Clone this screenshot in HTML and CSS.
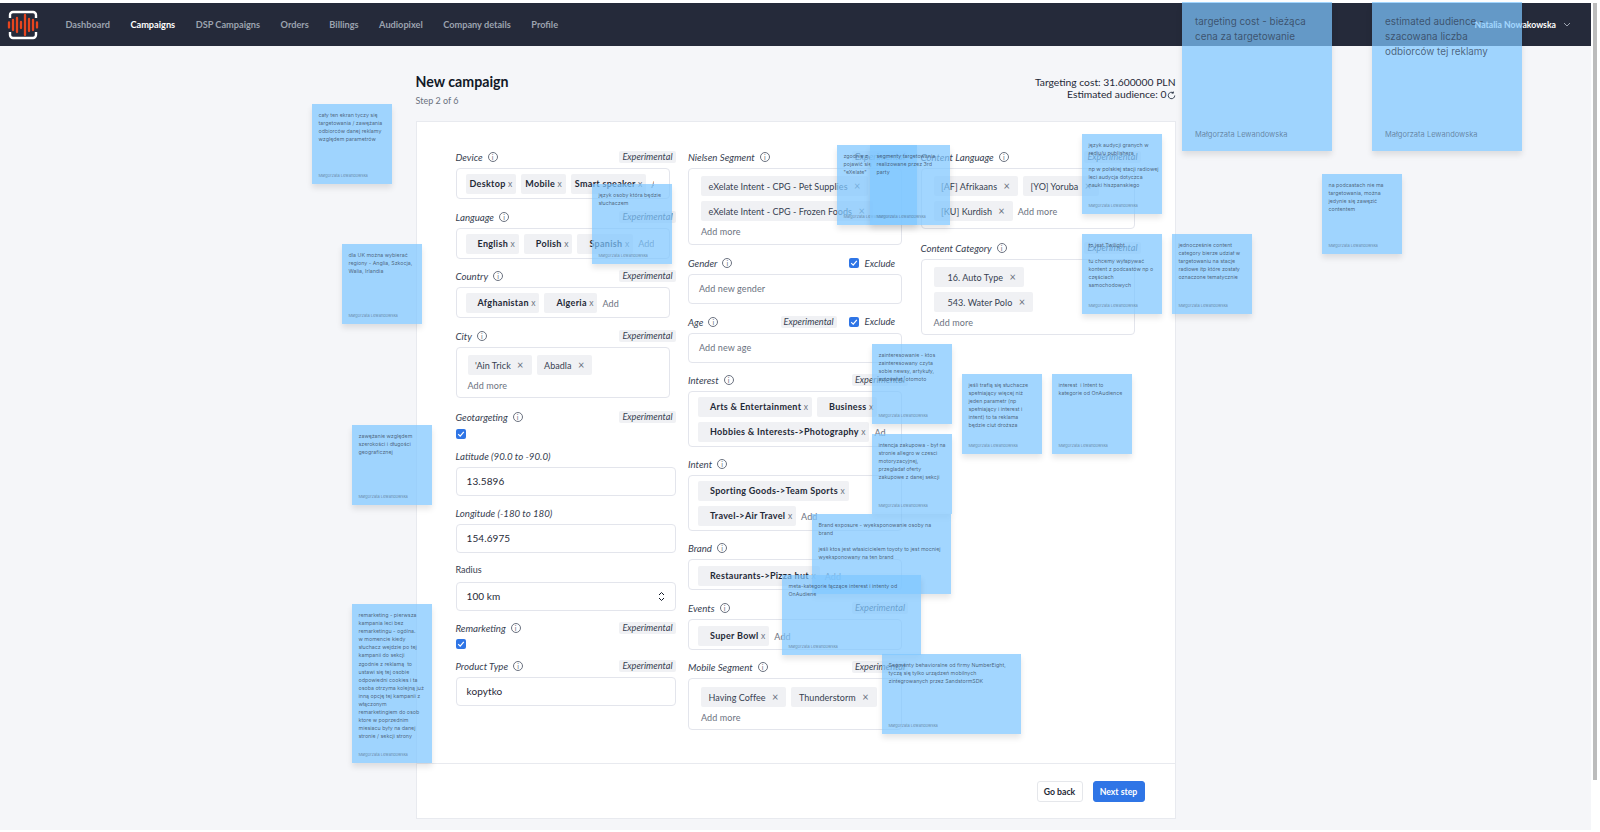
FILE: index.html
```html
<!DOCTYPE html>
<html lang="pl">
<head>
  <meta charset="UTF-8" />
  <meta name="viewport" content="width=device-width, initial-scale=1.0"/>
  <title>New campaign</title>
  <link rel="stylesheet" href="styles.css">
</head>
<body>
<div class="app">
  <main class="page">
    <nav class="navbar">
      <svg class="logo" width="32" height="30" viewBox="0 0 32 30">
        <path d="M3 8V5a3 3 0 0 1 3-3h20a3 3 0 0 1 3 3v3M3 22v3a3 3 0 0 0 3 3h20a3 3 0 0 0 3-3v-3" fill="none" stroke="#fff" stroke-width="2.4"/>
        <path d="M2 12.5v5M6 10v10M10 8v14M14 12v6M18 5v20M22 9v12M26 10v10M30 12.5v5" fill="none" stroke="#e8451e" stroke-width="2.3" stroke-linecap="round"/>
      </svg>
      <a class="nav-link">Dashboard</a>
      <a class="nav-link active">Campaigns</a>
      <a class="nav-link">DSP Campaigns</a>
      <a class="nav-link">Orders</a>
      <a class="nav-link">Billings</a>
      <a class="nav-link">Audiopixel</a>
      <a class="nav-link">Company details</a>
      <a class="nav-link">Profile</a>
      <div class="user">Natalia Nowakowska
        <svg width="8" height="5" viewBox="0 0 8 5"><path d="M1 1l3 3 3-3" fill="none" stroke="#9ca3af" stroke-width="1"/></svg>
      </div>
    </nav>

    <div class="container">
      <header class="head">
        <div>
          <h1>New campaign</h1>
          <p class="step">Step 2 of 6</p>
        </div>
        <div class="costs">
          <div>Targeting cost: 31.600000 PLN</div>
          <div>Estimated audience: 0<svg class="refresh" width="9" height="9" viewBox="0 0 10 10"><path d="M8.6 5A3.6 3.6 0 1 1 7 2M7 .6V2.4H5.2" fill="none" stroke="#374151" stroke-width="1.1"/></svg></div>
        </div>
      </header>

      <section class="card">
        <div class="form">
          <div class="col">
            <div class="field gap-half">
              <div class="label-row"><label>Device</label><i class="info">i</i><span class="pill">Experimental</span></div>
              <div class="box box-line">
                <div class="tag-row">
                  <span class="chip bold slim">Desktop <b>x</b></span>
                  <span class="chip bold slim">Mobile <b>x</b></span>
                  <span class="chip bold slim">Smart speaker <b>x</b></span>
                  <span class="add">Add</span>
                </div>
              </div>
            </div>
            <div class="field gap-half">
              <div class="label-row"><label>Language</label><i class="info">i</i><span class="pill">Experimental</span></div>
              <div class="box box-line">
                <div class="tag-row">
                  <span class="chip bold">English <b>x</b></span>
                  <span class="chip bold">Polish <b>x</b></span>
                  <span class="chip bold">Spanish <b>x</b></span>
                  <span class="add">Add</span>
                </div>
              </div>
            </div>
            <div class="field gap-half">
              <div class="label-row"><label>Country</label><i class="info">i</i><span class="pill">Experimental</span></div>
              <div class="box box-line">
                <div class="tag-row">
                  <span class="chip bold">Afghanistan <b>x</b></span>
                  <span class="chip bold">Algeria <b>x</b></span>
                  <span class="add">Add</span>
                </div>
              </div>
            </div>
            <div class="field gap-13">
              <div class="label-row"><label>City</label><i class="info">i</i><span class="pill">Experimental</span></div>
              <div class="box box-tags city">
                <div class="tag-row">
                  <span class="chip">'Ain Trick <em>×</em></span>
                  <span class="chip">Abadla <em>×</em></span>
                </div>
                <span class="add more">Add more</span>
              </div>
            </div>
            <div class="field gap-11">
              <div class="label-row"><label>Geotargeting</label><i class="info">i</i><span class="pill">Experimental</span></div>
              <span class="check top6"><svg width="8" height="8" viewBox="0 0 8 8"><path d="M1.2 4.2l2 2 3.6-4.4" fill="none" stroke="#fff" stroke-width="1.2"/></svg></span>
            </div>
            <div class="field gap-11">
              <div class="label-row"><label>Latitude (90.0 to -90.0)</label></div>
              <div class="input">13.5896</div>
            </div>
            <div class="field gap-11">
              <div class="label-row"><label>Longitude (-180 to 180)</label></div>
              <div class="input">154.6975</div>
            </div>
            <div class="field gap-11">
              <div class="label-row plain-row"><label class="plain">Radius</label></div>
              <div class="input select">100 km
                <svg width="7" height="11" viewBox="0 0 7 11"><path d="M1 4l2.5-2.5L6 4M1 7l2.5 2.5L6 7" fill="none" stroke="#111827" stroke-width="1"/></svg>
              </div>
            </div>
            <div class="field gap-11">
              <div class="label-row"><label>Remarketing</label><i class="info">i</i><span class="pill">Experimental</span></div>
              <span class="check"><svg width="8" height="8" viewBox="0 0 8 8"><path d="M1.2 4.2l2 2 3.6-4.4" fill="none" stroke="#fff" stroke-width="1.2"/></svg></span>
            </div>
            <div class="field">
              <div class="label-row"><label>Product Type</label><i class="info">i</i><span class="pill">Experimental</span></div>
              <div class="input">kopytko</div>
            </div>
          </div>

          <div class="col">
            <div class="field">
              <div class="label-row"><label>Nielsen Segment</label><i class="info">i</i><span class="pill">Experimental</span></div>
              <div class="box box-tags">
                <div class="tag-row"><span class="chip">eXelate Intent - CPG - Pet Supplies <em>×</em></span></div>
                <div class="tag-row"><span class="chip">eXelate Intent - CPG - Frozen Foods <em>×</em></span></div>
                <span class="add more">Add more</span>
              </div>
            </div>
            <div class="field gap-half">
              <div class="label-row"><label>Gender</label><i class="info">i</i>
                <span class="exclude"><span class="check"><svg width="8" height="8" viewBox="0 0 8 8"><path d="M1.2 4.2l2 2 3.6-4.4" fill="none" stroke="#fff" stroke-width="1.2"/></svg></span>Exclude</span>
              </div>
              <div class="box box-empty">Add new gender</div>
            </div>
            <div class="field gap-half">
              <div class="label-row"><label>Age</label><i class="info">i</i><span class="pill">Experimental</span>
                <span class="exclude next"><span class="check"><svg width="8" height="8" viewBox="0 0 8 8"><path d="M1.2 4.2l2 2 3.6-4.4" fill="none" stroke="#fff" stroke-width="1.2"/></svg></span>Exclude</span>
              </div>
              <div class="box box-empty">Add new age</div>
            </div>
            <div class="field gap-11">
              <div class="label-row"><label>Interest</label><i class="info">i</i><span class="pill">Experimental</span></div>
              <div class="box box-line">
                <div class="tag-row">
                  <span class="chip bold">Arts &amp; Entertainment <b>x</b></span>
                  <span class="chip bold">Business <b>x</b></span>
                </div>
                <div class="tag-row">
                  <span class="chip bold">Hobbies &amp; Interests-&gt;Photography <b>x</b></span>
                  <span class="add">Add</span>
                </div>
              </div>
            </div>
            <div class="field gap-11">
              <div class="label-row"><label>Intent</label><i class="info">i</i></div>
              <div class="box box-line">
                <div class="tag-row"><span class="chip bold">Sporting Goods-&gt;Team Sports <b>x</b></span></div>
                <div class="tag-row">
                  <span class="chip bold">Travel-&gt;Air Travel <b>x</b></span>
                  <span class="add">Add</span>
                </div>
              </div>
            </div>
            <div class="field">
              <div class="label-row"><label>Brand</label><i class="info">i</i></div>
              <div class="box box-line low">
                <div class="tag-row">
                  <span class="chip bold">Restaurants-&gt;Pizza hut <b>x</b></span>
                  <span class="add">Add</span>
                </div>
              </div>
            </div>
            <div class="field gap-11">
              <div class="label-row"><label>Events</label><i class="info">i</i><span class="pill">Experimental</span></div>
              <div class="box box-line low">
                <div class="tag-row">
                  <span class="chip bold">Super Bowl <b>x</b></span>
                  <span class="add">Add</span>
                </div>
              </div>
            </div>
            <div class="field">
              <div class="label-row"><label>Mobile Segment</label><i class="info">i</i><span class="pill">Experimental</span></div>
              <div class="box box-tags low">
                <div class="tag-row">
                  <span class="chip">Having Coffee <em>×</em></span>
                  <span class="chip">Thunderstorm <em>×</em></span>
                </div>
                <span class="add more">Add more</span>
              </div>
            </div>
          </div>

          <div class="col">
            <div class="field gap-13">
              <div class="label-row"><label>Content Language</label><i class="info">i</i><span class="pill">Experimental</span></div>
              <div class="box box-tags lang">
                <div class="tag-row">
                  <span class="chip">[AF] Afrikaans <em>×</em></span>
                  <span class="chip">[YO] Yoruba <em>×</em></span>
                </div>
                <div class="tag-row">
                  <span class="chip">[KU] Kurdish <em>×</em></span>
                  <span class="add">Add more</span>
                </div>
              </div>
            </div>
            <div class="field">
              <div class="label-row"><label>Content Category</label><i class="info">i</i><span class="pill">Experimental</span></div>
              <div class="box box-tags city-bottom">
                <div class="tag-row"><span class="chip wide">16. Auto Type <em>×</em></span></div>
                <div class="tag-row"><span class="chip wide">543. Water Polo <em>×</em></span></div>
                <span class="add more">Add more</span>
              </div>
            </div>
          </div>
        </div>
        <footer class="actions">
          <button class="btn">Go back</button>
          <button class="btn primary">Next step</button>
        </footer>
      </section>
    </div>

    <!-- karteczki z komentarzami -->
    <div class="note n1"><p>cały ten ekran tyczy się<br>targetowania / zawężania<br>odbiorców danej reklamy<br>względem parametrów</p><small>Małgorzata Lewandowska</small></div>
    <div class="note n2"><p>język osoby która będzie<br>słuchaczem</p><small>Małgorzata Lewandowska</small></div>
    <div class="note n3"><p>dla UK można wybierać<br>regiony - Anglia, Szkocja,<br>Walia, Irlandia</p><small>Małgorzata Lewandowska</small></div>
    <div class="note n4"><p>zawężanie względem<br>szerokości i długości<br>geograficznej</p><small>Małgorzata Lewandowska</small></div>
    <div class="note n5"><p>remarketing - pierwsza<br>kampania leci bez<br>remarketingu - ogólna.<br>w momencie kiedy<br>słuchacz wejdzie po tej<br>kampanii do sekcji<br>zgodnie z reklamą&nbsp; to<br>ustawi się tej osobie<br>odpowiedni cookies i ta<br>osoba otrzyma kolejną już<br>inną opcję tej kampanii z<br>włączonym<br>remarketingiem do osob<br>ktore w poprzednim<br>miesiacu były na danej<br>stronie / sekcji strony</p><small>Małgorzata Lewandowska</small></div>
    <div class="note n6"><p>zgodnie z<br>pojawić się<br>"eXelate"</p><small>Małgorzata Lewandowska</small></div>
    <div class="note n7"><p>segmenty targetowania<br>realizowane przez 3rd<br>party</p><small>Małgorzata Lewandowska</small></div>
    <div class="note n8"><p>język audycji granych w<br>radiu/u publishera<br><br>np w polskiej stacji radiowej<br>leci audycja dotyczca<br>nauki hiszpanskiego</p><small>Małgorzata Lewandowska</small></div>
    <div class="note n9"><p>to jest Twilight<br><br>tu chcemy wyłapywać<br>kontent z podcastów np o<br>częściach<br>samochodowych</p><small>Małgorzata Lewandowska</small></div>
    <div class="note n10"><p>jednocześnie content<br>category bierze udział w<br>targetowaniu na stacje<br>radiowe itp które zostały<br>oznaczone tematycznie</p><small>Małgorzata Lewandowska</small></div>
    <div class="note n11"><p>na podcastach nie ma<br>targetowania, można<br>jedynie się zawęzić<br>contentem</p><small>Małgorzata Lewandowska</small></div>
    <div class="note big n12"><p>targeting cost - bieżąca<br>cena za targetowanie</p><small>Małgorzata Lewandowska</small></div>
    <div class="note big n13"><p>estimated audience -<br>szacowana liczba<br>odbiorców tej reklamy</p><small>Małgorzata Lewandowska</small></div>
    <div class="note n14"><p>zainteresowanie - ktos<br>zainteresowany czyta<br>sobie newsy, artykuły,<br>autoświat, otomoto</p><small>Małgorzata Lewandowska</small></div>
    <div class="note n15"><p>jeśli trafią się słuchacze<br>spełniający więcej niż<br>jeden parametr (np<br>spełniający i interest i<br>intent) to ta reklama<br>będzie ciut droższa</p><small>Małgorzata Lewandowska</small></div>
    <div class="note n16"><p>interest&nbsp; i Intent to<br>kategorie od OnAudience</p><small>Małgorzata Lewandowska</small></div>
    <div class="note n17"><p>intencja zakupowa - był na<br>stronie allegro w czesci<br>motoryzacyjnej,<br>przegladał oferty<br>zakupowe z danej sekcji</p><small>Małgorzata Lewandowska</small></div>
    <div class="note wide n18"><p>Brand exposure - wyeksponowanie osoby na<br>brand<br><br>jeśli ktos jest własicicielem toyoty to jest mocniej<br>wyeksponowany na ten brand</p></div>
    <div class="note wide n19"><p>meta-kategorie łączące interest i intenty od<br>OnAudiene</p><small>Małgorzata Lewandowska</small></div>
    <div class="note wide n20"><p>Segmenty behavioralne od firmy NumberEight,<br>tyczą się tylko urządzeń mobilnych<br>zintegrowanych przez SandstormSDK</p><small>Małgorzata Lewandowska</small></div>
  </main>
  <div class="scrollbar"><div class="thumb"></div></div>
</div>
</body>
</html>
```

FILE: styles.css
```css
* {
  box-sizing: border-box;
}

html, body {
  margin: 0;
  height: 100%;
  overflow: hidden;
}

body {
  font-family: 'Lato', 'Open Sans', sans-serif;
  background-color: #fff;
  color: #374151;
  font-size: 11px;
}

.app {
  display: flex;
  height: 832px;
  padding: 3px 0 2px;
}

.page {
  flex: 1;
  position: relative;
  background-color: #f5f6f9;
}

.scrollbar {
  width: 9px;
  padding-left: 2px;
}

.thumb {
  width: 4px;
  height: 777px;
  background-color: #bcbcbc;
}

/* navbar */
.navbar {
  height: 43px;
  background-color: #252a3a;
  display: flex;
  align-items: center;
  gap: 20.5px;
  padding: 0 20px 0 7px;
}

.logo {
  margin-right: 6px;
}

.nav-link {
  color: #9ca3af;
  font-size: 9.2px;
  font-weight: 700;
}

.nav-link.active {
  color: #fff;
}

.user {
  margin-left: auto;
  color: #fff;
  font-size: 8.7px;
  font-weight: 700;
  display: flex;
  align-items: center;
  gap: 7px;
}

/* header */
.container {
  width: 760px;
  margin: 0 auto;
}

.head {
  height: 75px;
  padding-top: 27px;
  display: flex;
  justify-content: space-between;
}

h1 {
  margin: 0;
  font-size: 14.2px;
  line-height: 18px;
  color: #111827;
  font-weight: 700;
}

.step {
  margin: 4px 0 0;
  font-size: 9px;
  line-height: 12px;
  color: #6b7280;
}

.costs {
  text-align: right;
  font-size: 10.3px;
  line-height: 12px;
  color: #1f2937;
  padding-top: 3px;
}

.refresh {
  vertical-align: -2px;
}

/* card */
.card {
  height: 698px;
  background-color: #fff;
  border: 1px solid #e8eaef;
}

.form {
  height: 642px;
  border-bottom: 1px solid #e8eaef;
  padding: 29px 33px 0 39px;
  display: grid;
  grid-template-columns: repeat(3, 220px);
  column-gap: 12.5px;
}

.field {
  margin-bottom: 12px;
}

.gap-half {
  margin-bottom: 11.5px;
}

.gap-13 {
  margin-bottom: 13px;
}

.gap-11 {
  margin-bottom: 11px;
}

.label-row {
  height: 12px;
  margin-bottom: 5px;
  display: flex;
  align-items: center;
  white-space: nowrap;
}

.plain-row {
  margin-bottom: 6px;
}

label {
  font-style: italic;
  font-size: 9.7px;
  color: #374151;
}

label.plain {
  font-style: normal;
  font-size: 9px;
}

.info {
  width: 10px;
  height: 10px;
  margin-left: 5px;
  border: 1px solid #6b7280;
  border-radius: 50%;
  font-style: normal;
  font-size: 7px;
  line-height: 8px;
  text-align: center;
  color: #6b7280;
}

.pill {
  margin-left: auto;
  height: 12px;
  line-height: 12px;
  padding: 0 3px;
  background-color: #f0f1f4;
  border-radius: 2px;
  font-style: italic;
  font-size: 9.2px;
  color: #374151;
}

.exclude {
  margin-left: auto;
  margin-right: 13px;
  display: flex;
  align-items: center;
  gap: 6px;
  font-style: italic;
  font-size: 9.5px;
}

.exclude.next {
  margin-left: 12px;
}

.check {
  width: 10px;
  height: 10px;
  border-radius: 2px;
  background-color: #2f75e6;
  display: flex;
  align-items: center;
  justify-content: center;
}

.top6 {
  margin-top: 6px;
}

/* inputs */
.box {
  width: 214px;
  border: 1px solid #e3e5ec;
  border-radius: 4px;
  background-color: #fff;
}

.box-line {
  padding: 5px 15px 4px 9px;
  display: flex;
  flex-direction: column;
  gap: 5px;
}

.box-line.low {
  padding-top: 6px;
  padding-bottom: 3px;
}

.box-tags {
  padding: 7px 10px 6px 12px;
  display: flex;
  flex-direction: column;
  gap: 5px;
}

.box-tags.low {
  padding-top: 8px;
  padding-bottom: 5px;
}

.box-tags.city {
  padding-left: 11px;
  padding-bottom: 5px;
}

.box-tags.lang {
  padding-bottom: 7px;
}

.box-tags.city-bottom {
  padding-bottom: 5px;
}

.box-empty {
  height: 30px;
  padding-left: 10px;
  line-height: 28px;
  color: #6b7280;
  font-size: 9px;
  letter-spacing: 0.1px;
}

.input {
  height: 29px;
  padding: 0 10px;
  border: 1px solid #e3e5ec;
  border-radius: 4px;
  line-height: 27px;
  font-size: 10px;
  letter-spacing: 0.1px;
  color: #1f2937;
  background-color: #fff;
}

.select {
  display: flex;
  align-items: center;
  justify-content: space-between;
}

.tag-row {
  display: flex;
  gap: 5px;
  overflow: hidden;
  white-space: nowrap;
  align-items: center;
}

.chip {
  flex-shrink: 0;
  height: 20px;
  line-height: 20px;
  padding: 0 8px 0 7.5px;
  background-color: #f0f1f4;
  border-radius: 2px;
  font-size: 9px;
  color: #374151;
  letter-spacing: 0.05px;
}

.chip em {
  font-style: normal;
  color: #6b7280;
  font-size: 11px;
  margin-left: 4px;
}

.chip.wide {
  padding-left: 14px;
}

.chip.bold {
  padding: 0 4px 0 12px;
  font-weight: 700;
  letter-spacing: 0.3px;
  color: #1f2937;
}

.chip.slim {
  padding-left: 4px;
}

.chip b {
  font-weight: 400;
  font-size: 8.5px;
  color: #6b7280;
  letter-spacing: 0;
}

.add {
  color: #6b7280;
  flex-shrink: 0;
  font-size: 9px;
  letter-spacing: 0.1px;
}

.more {
  line-height: 12px;
}

/* footer */
.actions {
  height: 55px;
  display: flex;
  justify-content: flex-end;
  align-items: center;
  gap: 10px;
  padding-right: 30px;
}

.btn {
  height: 21px;
  width: 46px;
  padding: 0;
  background-color: #fff;
  border: 1px solid #e5e7eb;
  border-radius: 3px;
  font-family: inherit;
  font-size: 8.7px;
  font-weight: 700;
  color: #1f2937;
}

.btn.primary {
  width: 52px;
  background-color: #2f75e6;
  border-color: #2f75e6;
  color: #fff;
}

/* sticky notes */
.note {
  position: absolute;
  width: 80px;
  height: 80px;
  padding: 7px 3px 6.5px 6.5px;
  display: flex;
  flex-direction: column;
  justify-content: space-between;
  background-color: rgba(126, 198, 255, 0.716);
  box-shadow: 0 4px 6px rgba(0, 0, 0, 0.1);
  font-family: 'Inter', sans-serif;
  color: rgba(45, 55, 75, 0.72);
}

.note p {
  margin: 0;
  font-size: 5.3px;
  line-height: 8.1px;
  white-space: nowrap;
}

.note small {
  font-size: 4px;
  line-height: 5px;
  color: rgba(45, 55, 75, 0.5);
}

.note.big {
  width: 150px;
  height: 149px;
  padding: 12px 13px 11px;
}

.note.big p {
  font-size: 9.9px;
  line-height: 15px;
}

.note.big small {
  font-size: 7.5px;
  line-height: 10px;
}

.note.wide {
  width: 139px;
}

.n1 { left: 312px; top: 101px; }
.n2 { left: 592px; top: 181px; }
.n3 { left: 342px; top: 241px; }
.n4 { left: 352px; top: 422px; }
.n5 { left: 352px; top: 601px; height: 159px; }
.n6 { left: 837px; top: 142px; }
.n7 { left: 870px; top: 142px; }
.n8 { left: 1082px; top: 131px; }
.n9 { left: 1082px; top: 231px; }
.n10 { left: 1172px; top: 231px; }
.n11 { left: 1322px; top: 171px; }
.n12 { left: 1182px; top: -1px; }
.n13 { left: 1372px; top: -1px; }
.n14 { left: 872px; top: 341px; }
.n15 { left: 962px; top: 371px; }
.n16 { left: 1052px; top: 371px; }
.n17 { left: 872px; top: 431px; }
.n18 { left: 812px; top: 511px; }
.n19 { left: 782px; top: 572px; }
.n20 { left: 882px; top: 651px; }
```
